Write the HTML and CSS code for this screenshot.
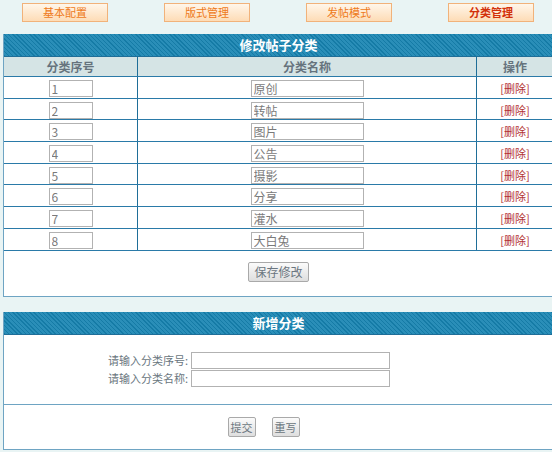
FILE: index.html
```html
<!DOCTYPE html>
<html lang="zh-CN">
<head>
<meta charset="utf-8">
<title>分类管理</title>
<link rel="stylesheet" href="styles.css">
</head>
<body>
<div class="tabs">
  <a class="tab">基本配置</a>
  <a class="tab">版式管理</a>
  <a class="tab">发帖模式</a>
  <a class="tab active">分类管理</a>
</div>

<div class="panel panel-edit">
  <div class="panel-head">修改帖子分类</div>
  <table class="grid">
    <thead>
      <tr><th class="c1">分类序号</th><th class="c2">分类名称</th><th class="c3">操作</th></tr>
    </thead>
    <tbody>
      <tr><td><input class="num" value="1"></td><td><input class="name" value="原创"></td><td><a class="del">[删除]</a></td></tr>
      <tr><td><input class="num" value="2"></td><td><input class="name" value="转帖"></td><td><a class="del">[删除]</a></td></tr>
      <tr><td><input class="num" value="3"></td><td><input class="name" value="图片"></td><td><a class="del">[删除]</a></td></tr>
      <tr><td><input class="num" value="4"></td><td><input class="name" value="公告"></td><td><a class="del">[删除]</a></td></tr>
      <tr><td><input class="num" value="5"></td><td><input class="name" value="摄影"></td><td><a class="del">[删除]</a></td></tr>
      <tr><td><input class="num" value="6"></td><td><input class="name" value="分享"></td><td><a class="del">[删除]</a></td></tr>
      <tr><td><input class="num" value="7"></td><td><input class="name" value="灌水"></td><td><a class="del">[删除]</a></td></tr>
      <tr><td><input class="num" value="8"></td><td><input class="name" value="大白兔"></td><td><a class="del">[删除]</a></td></tr>
    </tbody>
  </table>
  <div class="panel-foot foot-save">
    <button class="btn btn-save">保存修改</button>
  </div>
</div>

<div class="panel panel-add">
  <div class="panel-head">新增分类</div>
  <div class="add-body">
    <div class="field"><label>请输入分类序号:</label><input class="wide"></div>
    <div class="field"><label>请输入分类名称:</label><input class="wide"></div>
  </div>
  <div class="panel-foot foot-add">
    <button class="btn btn-small">提交</button>
    <button class="btn btn-small">重写</button>
  </div>
</div>
</body>
</html>
```

FILE: styles.css
```css
html { overflow: hidden; }
body {
  margin: 0;
  padding: 0 0 0 3px;
  background: #e9f4f4;
  font-family: "Noto Sans CJK SC", "Liberation Sans", sans-serif;
  font-size: 12px;
  color: #555;
}
.tabs {
  display: flex;
  gap: 56px;
  padding: 3px 0 0 19px;
  height: 19px;
}
.tab {
  box-sizing: border-box;
  width: 86px;
  height: 19px;
  line-height: 17px;
  text-align: center;
  border: 1px solid #f1b27a;
  background: linear-gradient(#fff6ea, #fddcb6);
  color: #ee7a1a;
  font-size: 11px;
}
.tab.active {
  color: #d2300a;
  font-weight: bold;
}
.panel {
  box-sizing: border-box;
  width: 551px;
  background: #fff;
  border: 1px solid #6ea4c3;
  border-top: 0;
}
.panel-edit { margin-top: 12px; }
.panel-add { margin-top: 15px; }
.panel-head {
  height: 23px;
  line-height: 22px;
  text-align: center;
  color: #fff;
  font-weight: bold;
  font-size: 13px;
  background: repeating-linear-gradient(45deg, #157ba6 0 1px, #2a8eb8 1px 3px);
  border-bottom: 1px solid #1f6e98;
  box-sizing: border-box;
}
.grid {
  width: 100%;
  border-collapse: collapse;
}
.grid th {
  height: 19px;
  background: #d5e4e5;
  color: #66737d;
  font-weight: bold;
  font-size: 12px;
  padding: 0;
  border-bottom: 1px solid #2a7aa8;
}
.grid .c1 { width: 133px; }
.grid .c2 { width: 338px; }
.grid th + th, .grid td + td { border-left: 1px solid #1f6e98; }
.grid td {
  height: 20.7px;
  padding: 0;
  text-align: center;
  border-bottom: 1px solid #2a7aa8;
}
input {
  box-sizing: border-box;
  height: 17px;
  border: 1px solid #b2b2b2;
  padding: 0 2px;
  font: 12px "Noto Sans CJK SC", "Liberation Sans", sans-serif;
  color: #7a7a7a;
  background: #fff;
  vertical-align: middle;
}
input.num { width: 44px; }
input.name { width: 113px; }
.del { color: #b23030; font-size: 11px; }
.panel-foot {
  display: flex;
  justify-content: center;
}
.foot-save {
  height: 45px;
  padding-top: 11px;
  box-sizing: border-box;
}
.btn {
  box-sizing: border-box;
  height: 20px;
  border: 1px solid #a9a9a9;
  border-radius: 2px;
  background: linear-gradient(#fbfbfb, #dedede);
  color: #6b7680;
  font: 12px "Noto Sans CJK SC", "Liberation Sans", sans-serif;
  padding: 0;
  line-height: 18px;
}
.btn-save { width: 61px; }
.btn-small { width: 28px; font-size: 11px; }
.foot-add {
  gap: 16px;
  padding: 12px 30px 0 0;
  height: 45px;
  box-sizing: border-box;
  border-top: 1px solid #6ea4c3;
}
.add-body {
  height: 69px;
  padding-top: 17px;
  box-sizing: border-box;
}
.field {
  display: flex;
  align-items: center;
  height: 17px;
  margin-bottom: 1px;
  padding-left: 86px;
}
.field label {
  width: 98px;
  margin-right: 3px;
  text-align: right;
  color: #6a7680;
  font-size: 11px;
}
input.wide { width: 199px; }
```
